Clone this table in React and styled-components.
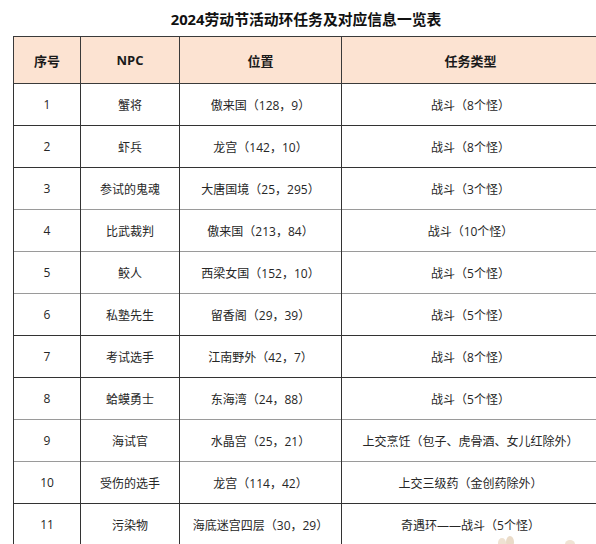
import React from 'react';
import styled, { createGlobalStyle } from 'styled-components';

const GlobalStyle = createGlobalStyle`
  html, body {
    margin: 0;
    padding: 0;
    background: #ffffff;
    overflow: hidden;
  }
  body {
    font-family: "Open Sans", "Noto Sans CJK SC", sans-serif;
    color: #222;
  }
`;

const Page = styled.div`
  position: relative;
  width: 596px;
  height: 544px;
  overflow: hidden;
  background: #fff;
`;

const Title = styled.h1`
  margin: 0;
  width: 586px;
  margin-left: 13px;
  height: 36px;
  display: flex;
  align-items: center;
  justify-content: center;
  font-size: 14.8px;
  font-weight: 700;
  color: #111;
  letter-spacing: 0;
`;

const Table = styled.table`
  margin-left: 13px;
  width: 586px;
  border-collapse: collapse;
  table-layout: fixed;
  font-size: 12px;
`;

const HeadCell = styled.th`
  height: 46px;
  padding: 0;
  background: #fce3d2;
  border: 1px solid #3a3a3a;
  font-size: 13px;
  font-weight: 700;
  color: #1a1a1a;
  text-align: center;
`;

const Row = styled.tr`
  height: 42px;
  border-bottom: ${p => (p.$soft ? '1.5px solid #9a9a9a' : '1px solid #333')};
`;

const Cell = styled.td`
  padding: 0;
  text-align: center;
  border-left: 1px solid #333;
  border-right: 1px solid #333;
  color: #262626;
  white-space: nowrap;
`;

const Sticker = styled.svg`
  position: absolute;
  left: 490px;
  top: 534px;
  width: 100px;
  height: 10px;
`;

const rows = [
  ['1', '蟹将', '傲来国（128，9）', '战斗（8个怪）'],
  ['2', '虾兵', '龙宫（142，10）', '战斗（8个怪）'],
  ['3', '参试的鬼魂', '大唐国境（25，295）', '战斗（3个怪）', true],
  ['4', '比武裁判', '傲来国（213，84）', '战斗（10个怪）', true],
  ['5', '鲛人', '西梁女国（152，10）', '战斗（5个怪）', true],
  ['6', '私塾先生', '留香阁（29，39）', '战斗（5个怪）'],
  ['7', '考试选手', '江南野外（42，7）', '战斗（8个怪）'],
  ['8', '蛤蟆勇士', '东海湾（24，88）', '战斗（5个怪）', true],
  ['9', '海试官', '水晶宫（25，21）', '上交烹饪（包子、虎骨酒、女儿红除外）', true],
  ['10', '受伤的选手', '龙宫（114，42）', '上交三级药（金创药除外）'],
  ['11', '污染物', '海底迷宫四层（30，29）', '奇遇环——战斗（5个怪）'],
];

const App = () => (
  <Page>
    <GlobalStyle />
    <Title>2024劳动节活动环任务及对应信息一览表</Title>
    <Table>
      <colgroup>
        <col style={{ width: 67 }} />
        <col style={{ width: 99 }} />
        <col style={{ width: 162 }} />
        <col style={{ width: 258 }} />
      </colgroup>
      <thead>
        <tr>
          <HeadCell>序号</HeadCell>
          <HeadCell>NPC</HeadCell>
          <HeadCell>位置</HeadCell>
          <HeadCell>任务类型</HeadCell>
        </tr>
      </thead>
      <tbody>
        {rows.map(([no, npc, place, task, soft]) => (
          <Row key={no} $soft={soft}>
            <Cell>{no}</Cell>
            <Cell>{npc}</Cell>
            <Cell>{place}</Cell>
            <Cell>{task}</Cell>
          </Row>
        ))}
      </tbody>
    </Table>
    <Sticker viewBox="0 0 100 10">
      <ellipse cx="12" cy="9" rx="4" ry="5" fill="#efe2d2" />
      <ellipse cx="20" cy="8" rx="4" ry="6" fill="#eadbc8" />
      <ellipse cx="80" cy="10" rx="5" ry="4" fill="#f0e3d4" />
    </Sticker>
  </Page>
);

export default App;
